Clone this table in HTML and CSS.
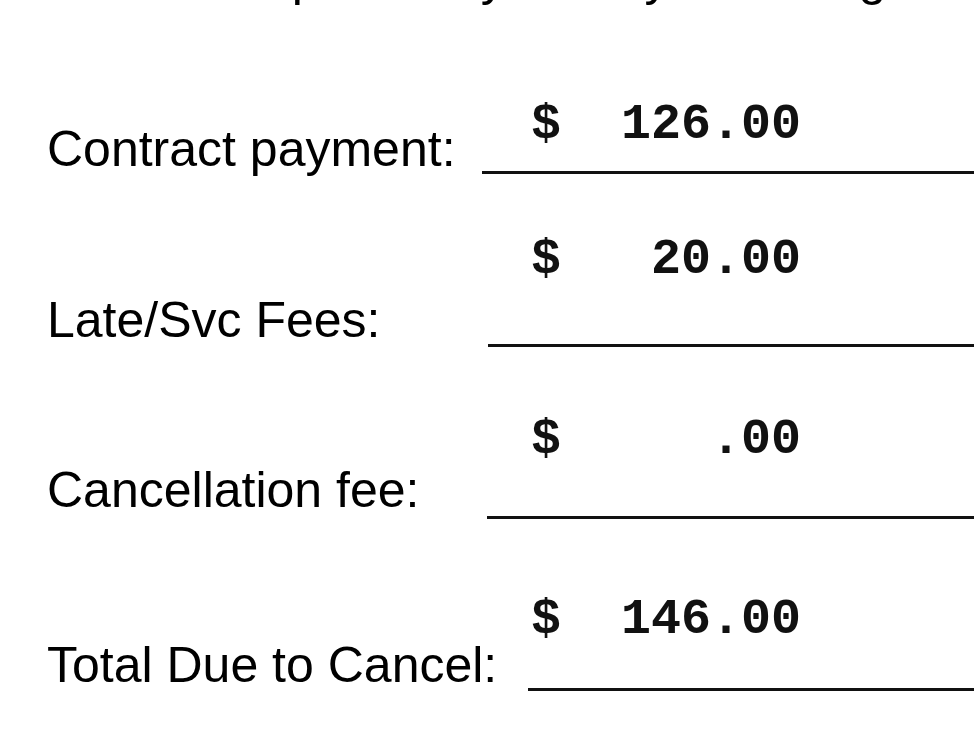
FILE: index.html
```html
<!DOCTYPE html>
<html lang="en">
<head>
<meta charset="utf-8">
<title>Cancellation amounts</title>
<link rel="stylesheet" href="styles.css">
</head>
<body>
<div class="page">
  <div class="clip"><div class="clip-text">Total due upon this you may receive guidance</div></div>

  <div class="row r1">
    <div class="amount">$  126.00</div>
    <div class="line"><span class="label">Contract payment:</span><span class="rule"></span></div>
  </div>

  <div class="row r2">
    <div class="amount">$   20.00</div>
    <div class="line"><span class="label">Late/Svc Fees:</span><span class="rule"></span></div>
  </div>

  <div class="row r3">
    <div class="amount">$     .00</div>
    <div class="line"><span class="label">Cancellation fee:</span><span class="rule"></span></div>
  </div>

  <div class="row r4">
    <div class="amount">$  146.00</div>
    <div class="line"><span class="label">Total Due to Cancel:</span><span class="rule"></span></div>
  </div>
</div>
</body>
</html>
```

FILE: styles.css
```css
html, body {
  margin: 0;
  padding: 0;
  background: #fff;
}

body {
  width: 974px;
  height: 746px;
  overflow: hidden;
  color: #000;
  font-family: "Liberation Sans", Arial, sans-serif;
}

.page {
  padding-left: 47px;
}

.clip {
  height: 7px;
  overflow: hidden;
}

.clip-text {
  margin-top: -47px;
  font-size: 50px;
  line-height: 50px;
  white-space: nowrap;
}

.amount {
  margin-left: 484px;
  font-family: "Liberation Mono", "Courier New", monospace;
  font-weight: bold;
  font-size: 50px;
  line-height: 50px;
  white-space: pre;
  color: #111;
}

.line {
  display: flex;
  align-items: flex-end;
  height: 50px;
}

.label {
  font-size: 50px;
  line-height: 50px;
  white-space: nowrap;
  min-width: 441px;
}

.rule {
  flex: 1;
  align-self: flex-end;
  border-bottom: 3px solid #111;
}

.r1 { margin-top: 93px; }
.r1 .line { margin-top: -26px; }
.r1 .label { min-width: 435px; }
.r1 .rule { margin-bottom: 0; }

.r2 { margin-top: 61px; }
.r2 .line { margin-top: 10px; }
.r2 .rule { margin-bottom: -2px; }

.r3 { margin-top: 70px; }
.r3 .line { margin-top: 0; }
.r3 .label { min-width: 440px; }
.r3 .rule { margin-bottom: -4px; }

.r4 { margin-top: 80px; }
.r4 .line { margin-top: -5px; }
.r4 .label { margin-right: 31px; min-width: 0; }
.r4 .rule { margin-bottom: -1px; }
```
